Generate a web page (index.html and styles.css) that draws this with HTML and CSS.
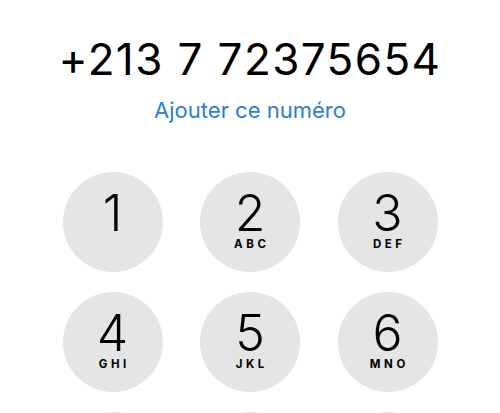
FILE: index.html
```html
<!DOCTYPE html>
<html lang="fr">
<head>
<meta charset="utf-8">
<link rel="stylesheet" href="styles.css">
</head>
<body>
<main class="dialer">
  <div class="number">+213 7 72375654</div>
  <div class="add">Ajouter ce numéro</div>
  <div class="keypad">
    <div class="key"><span class="digit">1</span><span class="letters"></span></div>
    <div class="key"><span class="digit">2</span><span class="letters">ABC</span></div>
    <div class="key"><span class="digit">3</span><span class="letters">DEF</span></div>
    <div class="key"><span class="digit">4</span><span class="letters">GHI</span></div>
    <div class="key"><span class="digit">5</span><span class="letters">JKL</span></div>
    <div class="key"><span class="digit">6</span><span class="letters">MNO</span></div>
    <div class="key"><span class="digit">7</span><span class="letters">PQRS</span></div>
    <div class="key"><span class="digit">8</span><span class="letters">TUV</span></div>
    <div class="key"><span class="digit">9</span><span class="letters">WXYZ</span></div>
  </div>
</main>
</body>
</html>
```
FILE: styles.css
```css
html, body {
  margin: 0;
  padding: 0;
  background: #ffffff;
  overflow: hidden;
}
body {
  width: 500px;
  height: 413px;
  font-family: Inter, "Liberation Sans", sans-serif;
  color: #000;
}
.dialer {
  display: flex;
  flex-direction: column;
  align-items: center;
  padding-top: 37px;
}
.number {
  font-size: 44px;
  line-height: 44px;
  font-weight: 400;
  letter-spacing: 1.4px;
  text-align: center;
}
.add {
  margin-top: 18px;
  font-size: 22px;
  line-height: 22px;
  color: #2a7fd4;
}
.keypad {
  margin-top: 51px;
  display: grid;
  grid-template-columns: repeat(3, 100px);
  column-gap: 37.5px;
  row-gap: 20px;
}
.key {
  width: 100px;
  height: 100px;
  border-radius: 50%;
  background: #e5e5e5;
  display: flex;
  flex-direction: column;
  align-items: center;
  box-sizing: border-box;
  padding-top: 16px;
}
.digit {
  font-size: 50px;
  line-height: 50px;
  font-weight: 300;
}
.letters {
  margin-top: 1px;
  height: 11px;
  font-size: 11.5px;
  line-height: 11px;
  font-weight: 700;
  letter-spacing: 3.6px;
  padding-left: 3.6px;
}
```
